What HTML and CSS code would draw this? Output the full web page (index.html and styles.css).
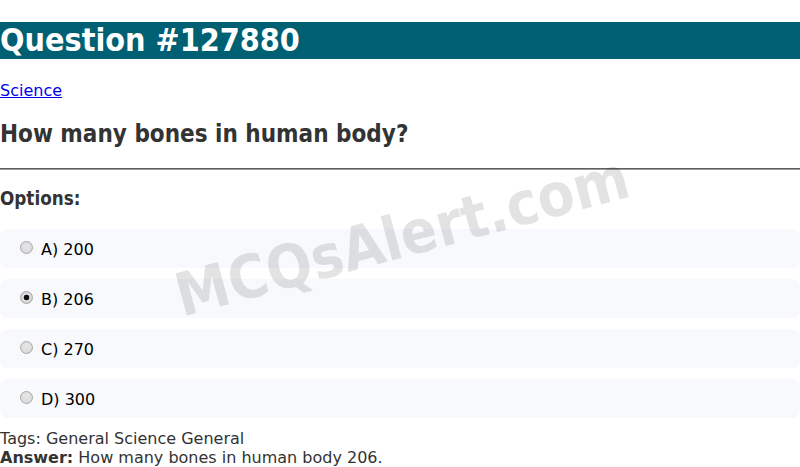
FILE: index.html
```html
<!DOCTYPE html>
<html>
<head>
<meta charset="utf-8">
<title>Question #127880</title>
<link rel="stylesheet" href="styles.css">
</head>
<body>
<h1 class="title">Question #127880</h1>
<p class="cat"><a href="#">Science</a></p>
<h2 class="question">How many bones in human body?</h2>
<hr class="rule">
<h3 class="opts-title">Options:</h3>
<div class="options">
  <label class="option"><input class="radio" type="radio" name="q"><span>A) 200</span></label>
  <label class="option"><input class="radio" type="radio" name="q" checked><span>B) 206</span></label>
  <label class="option"><input class="radio" type="radio" name="q"><span>C) 270</span></label>
  <label class="option"><input class="radio" type="radio" name="q"><span>D) 300</span></label>
</div>
<div class="meta">Tags: General Science General</div>
<div class="meta"><b>Answer:</b> How many bones in human body 206.</div>
<div class="watermark">MCQsAlert.com</div>
</body>
</html>
```
FILE: styles.css
```css
html, body {
  margin: 0;
  padding: 0;
}
body {
  font-family: "DejaVu Sans", sans-serif;
  font-size: 16px;
  color: #333;
  position: relative;
  overflow: hidden;
  height: 467px;
}
.title, .question, .opts-title {
  font-family: "DejaVu Sans Condensed", "DejaVu Sans", sans-serif;
  font-weight: bold;
}
.title {
  font-size: 32px;
  line-height: 37px;
  margin: 22px 0;
  background: #006073;
  color: #fff;
}
.cat {
  margin: 0;
  line-height: 19px;
}
.cat a {
  color: #0000ee;
}
.question {
  font-size: 24px;
  line-height: 28px;
  margin: 20px 0;
}
.rule {
  margin: 0;
  height: 0;
  border: none;
  border-top: 1px solid #5e5e5e;
  border-bottom: 1px solid #9a9a9a;
}
.opts-title {
  font-size: 18.72px;
  line-height: 22px;
  margin: 18px 0 19px;
}
.options {
  display: flex;
  flex-direction: column;
  gap: 11.5px;
  margin-bottom: 12px;
}
.option {
  display: flex;
  align-items: center;
  height: 38.5px;
  box-sizing: border-box;
  background: #f8f9fc;
  border-radius: 8px;
  padding: 2px 15px 0 20px;
  color: #000;
}
.option span {
  margin-left: 8px;
}
.radio {
  appearance: none;
  -webkit-appearance: none;
  margin: 0 0 3px 0;
  width: 13px;
  height: 13px;
  border-radius: 50%;
  border: 1px solid #a8a8a8;
  background: radial-gradient(circle at 50% 40%, #e8e8e8, #d4d4d4);
  box-sizing: border-box;
  flex: none;
}
.radio:checked {
  background: radial-gradient(circle, #111 0 2.6px, #e6e6e6 3.2px 4px, #cfcfcf 4.6px);
}
.meta {
  line-height: 18.6px;
}
.meta + .meta {
  line-height: 20px;
}
.watermark {
  position: absolute;
  left: 402px;
  top: 236px;
  transform: translate(-50%, -50%) rotate(-15deg);
  font-family: "DejaVu Sans Condensed", "DejaVu Sans", sans-serif;
  font-size: 60px;
  font-weight: bold;
  color: rgba(0, 0, 0, 0.11);
  white-space: nowrap;
  pointer-events: none;
}
```
